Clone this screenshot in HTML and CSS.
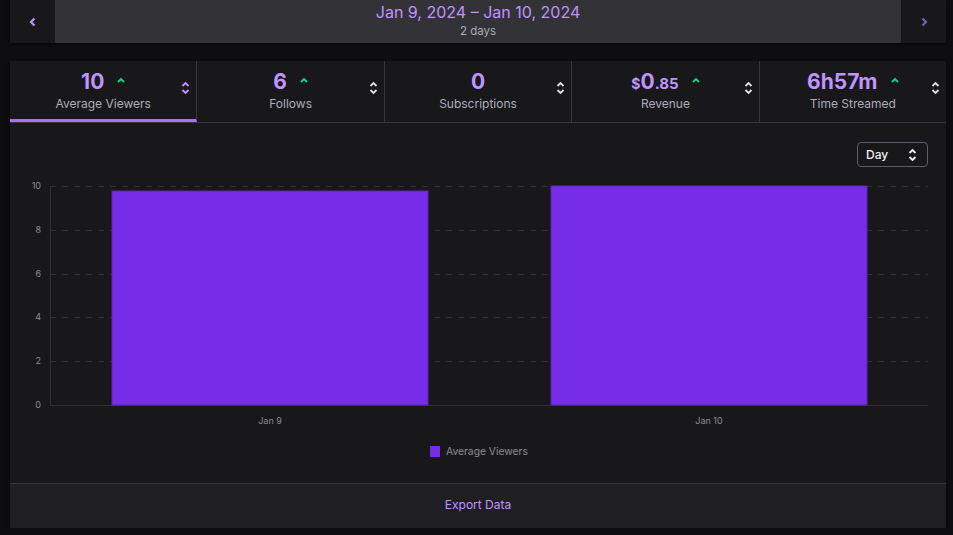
FILE: index.html
```html
<!DOCTYPE html>
<html>
<head>
    <title>Stream Summary</title>
    <link rel="stylesheet" href="styles.css">
</head>
<body>
<div class="topbar">
    <div class="nav-btn">
        <svg width="8" height="10" viewBox="0 0 8 10"><path d="M5.5 1.5 L2 5 L5.5 8.5" fill="none" stroke="#bf94ff" stroke-width="2.2"/></svg>
    </div>
    <div class="range">
        <div class="range-title">Jan 9, 2024 – Jan 10, 2024</div>
        <div class="range-sub">2 days</div>
    </div>
    <div class="nav-btn">
        <svg width="8" height="10" viewBox="0 0 8 10"><path d="M2.5 1.5 L6 5 L2.5 8.5" fill="none" stroke="#7a5aba" stroke-width="2.2"/></svg>
    </div>
</div>

<div class="card">
    <div class="tabs">
        <div class="tab active">
            <div class="tab-value">10 <span class="up"><svg width="8" height="6" viewBox="0 0 8 6"><path d="M1 5 L4 2 L7 5" fill="none" stroke="currentColor" stroke-width="1.8"/></svg></span></div>
            <div class="tab-label">Average Viewers</div>
            <svg class="sort" width="9" height="14" viewBox="0 0 9 14"><path d="M1.5 5 L4.5 2 L7.5 5 M1.5 9 L4.5 12 L7.5 9" fill="none" stroke="currentColor" stroke-width="1.8"/></svg>
        </div>
        <div class="tab">
            <div class="tab-value">6 <span class="up"><svg width="8" height="6" viewBox="0 0 8 6"><path d="M1 5 L4 2 L7 5" fill="none" stroke="currentColor" stroke-width="1.8"/></svg></span></div>
            <div class="tab-label">Follows</div>
            <svg class="sort" width="9" height="14" viewBox="0 0 9 14"><path d="M1.5 5 L4.5 2 L7.5 5 M1.5 9 L4.5 12 L7.5 9" fill="none" stroke="currentColor" stroke-width="1.8"/></svg>
        </div>
        <div class="tab">
            <div class="tab-value">0</div>
            <div class="tab-label">Subscriptions</div>
            <svg class="sort" width="9" height="14" viewBox="0 0 9 14"><path d="M1.5 5 L4.5 2 L7.5 5 M1.5 9 L4.5 12 L7.5 9" fill="none" stroke="currentColor" stroke-width="1.8"/></svg>
        </div>
        <div class="tab">
            <div class="tab-value"><span class="cur">$</span>0<span class="cents">.85</span> <span class="up"><svg width="8" height="6" viewBox="0 0 8 6"><path d="M1 5 L4 2 L7 5" fill="none" stroke="currentColor" stroke-width="1.8"/></svg></span></div>
            <div class="tab-label">Revenue</div>
            <svg class="sort" width="9" height="14" viewBox="0 0 9 14"><path d="M1.5 5 L4.5 2 L7.5 5 M1.5 9 L4.5 12 L7.5 9" fill="none" stroke="currentColor" stroke-width="1.8"/></svg>
        </div>
        <div class="tab">
            <div class="tab-value">6h57m <span class="up"><svg width="8" height="6" viewBox="0 0 8 6"><path d="M1 5 L4 2 L7 5" fill="none" stroke="currentColor" stroke-width="1.8"/></svg></span></div>
            <div class="tab-label">Time Streamed</div>
            <svg class="sort" width="9" height="14" viewBox="0 0 9 14"><path d="M1.5 5 L4.5 2 L7.5 5 M1.5 9 L4.5 12 L7.5 9" fill="none" stroke="currentColor" stroke-width="1.8"/></svg>
        </div>
    </div>

    <div class="chart-area">
        <div class="chart-tools">
            <div class="select">
                <span>Day</span>
                <svg width="9" height="14" viewBox="0 0 9 14"><path d="M1.5 5 L4.5 2 L7.5 5 M1.5 9 L4.5 12 L7.5 9" fill="none" stroke="#efeff1" stroke-width="1.8"/></svg>
            </div>
        </div>
        <svg class="chart" width="936" height="298" viewBox="10 172 936 298">
            <g stroke="#303035" stroke-width="1" stroke-dasharray="6 6">
                <line x1="50" y1="186.5" x2="928" y2="186.5"/>
                <line x1="50" y1="230.5" x2="928" y2="230.5"/>
                <line x1="50" y1="274.5" x2="928" y2="274.5"/>
                <line x1="50" y1="317.5" x2="928" y2="317.5"/>
                <line x1="50" y1="361.5" x2="928" y2="361.5"/>
            </g>
            <line x1="50.5" y1="186" x2="50.5" y2="405" stroke="#303035"/>
            <line x1="50" y1="405.5" x2="928" y2="405.5" stroke="#303035"/>
            <g fill="#8c8c95" font-size="9" text-anchor="end" font-family="Inter, sans-serif">
                <text x="41" y="189">10</text>
                <text x="41" y="233">8</text>
                <text x="41" y="277">6</text>
                <text x="41" y="320">4</text>
                <text x="41" y="364">2</text>
                <text x="41" y="408">0</text>
            </g>
            <rect x="112" y="191" width="316" height="214" fill="#772ce8" stroke="#5f22bb" stroke-width="1"/>
            <rect x="551" y="186" width="316" height="219" fill="#772ce8" stroke="#5f22bb" stroke-width="1"/>
            <g fill="#8c8c95" font-size="9" text-anchor="middle" font-family="Inter, sans-serif">
                <text x="270" y="424">Jan 9</text>
                <text x="709" y="424">Jan 10</text>
            </g>
            <rect x="430" y="446" width="10" height="11" fill="#772ce8"/>
            <text x="446" y="455" fill="#8c8c95" font-size="10.3" font-family="Inter, sans-serif">Average Viewers</text>
        </svg>
    </div>

    <div class="footer">
        <a class="export" href="#">Export Data</a>
    </div>
</div>
</body>
</html>
```

FILE: styles.css
```css
body {
  margin: 0;
  background-color: #0e0e10;
  font-family: Inter, "Noto Sans", sans-serif;
  color: #efeff1;
}

.topbar {
  display: flex;
  height: 43px;
  margin: 0 7px 0 10px;
  box-shadow: 0 1px 3px rgba(0, 0, 0, 0.6);
}

.nav-btn {
  width: 45px;
  display: flex;
  align-items: center;
  justify-content: center;
  background-color: #18181b;
}

.range {
  flex: 1;
  display: flex;
  flex-direction: column;
  align-items: center;
  background-color: #323237;
  padding-top: 2px;
}

.range-title {
  color: #bf94ff;
  font-size: 16px;
  line-height: 20px;
}

.range-sub {
  color: #adadb8;
  font-size: 11.5px;
  line-height: 16px;
  margin-top: 1px;
}

.card {
  margin: 18px 7px 0 10px;
  background-color: #18181b;
  box-shadow: 0 1px 3px rgba(0, 0, 0, 0.6);
}

.tabs {
  display: flex;
  height: 61px;
  border-bottom: 1px solid #35353b;
}

.tab {
  flex: 1;
  position: relative;
  display: flex;
  flex-direction: column;
  align-items: center;
  padding-top: 9px;
  box-sizing: border-box;
  border-right: 1px solid #35353b;
}

.tab:last-child {
  border-right: none;
}

.tab.active {
  border-bottom: 3px solid #a970ff;
}

.tab-value {
  color: #bf94ff;
  font-size: 21px;
  font-weight: 700;
  height: 24px;
  line-height: 24px;
  display: flex;
  align-items: baseline;
}

.tab-value .cur {
  font-size: 14px;
}

.tab-value .cents {
  font-size: 15px;
}

.up {
  color: #00db84;
  margin-left: 13px;
  position: relative;
  top: -6px;
}

.tab-label {
  color: #adadb8;
  font-size: 12px;
  line-height: 16px;
  margin-top: 2px;
}

.sort {
  position: absolute;
  right: 6px;
  top: 20px;
  color: #dedee3;
}

.tab.active .sort {
  color: #bf94ff;
}

.chart-area {
  height: 360px;
}

.chart-tools {
  display: flex;
  justify-content: flex-end;
  padding: 19px 18px 0 0;
}

.select {
  width: 71px;
  height: 25px;
  box-sizing: border-box;
  border: 1px solid #5c5c66;
  border-radius: 4px;
  display: flex;
  align-items: center;
  justify-content: space-between;
  padding: 0 10px 0 8px;
  font-size: 12px;
  font-weight: 500;
}

.chart {
  display: block;
  margin-top: 5px;
}

.footer {
  height: 44px;
  background-color: #1f1f23;
  border-top: 1px solid #35353b;
  display: flex;
  align-items: center;
  justify-content: center;
}

.export {
  color: #bf94ff;
  font-size: 12px;
  line-height: 16px;
  margin-bottom: 2px;
  text-decoration: none;
}
```
